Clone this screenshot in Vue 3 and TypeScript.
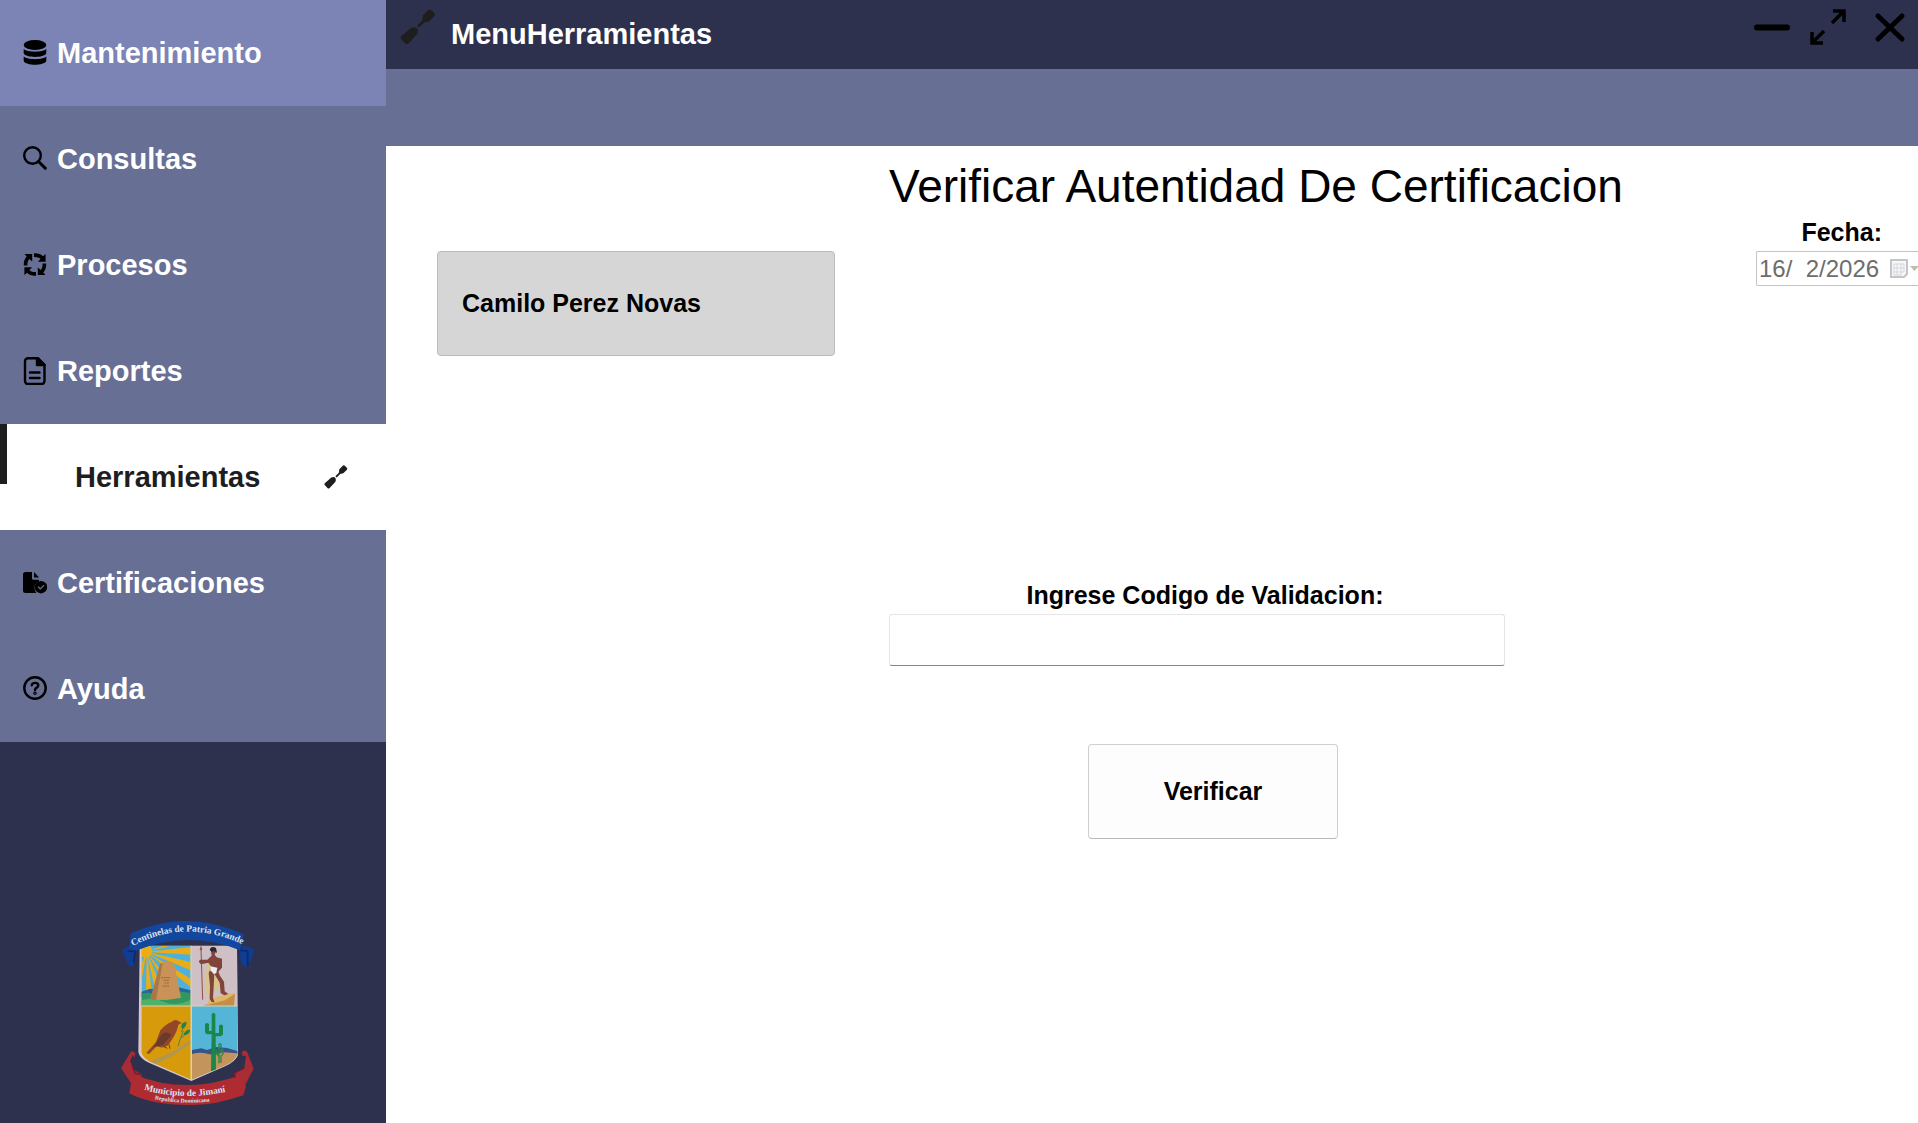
<script setup lang="ts">
import { ref } from 'vue'

type IconName = 'database' | 'search' | 'cycle' | 'report' | 'tools' | 'certificate' | 'help'

interface MenuItem {
  label: string
  icon: IconName
}

const items: MenuItem[] = [
  { label: 'Mantenimiento', icon: 'database' },
  { label: 'Consultas', icon: 'search' },
  { label: 'Procesos', icon: 'cycle' },
  { label: 'Reportes', icon: 'report' },
  { label: 'Herramientas', icon: 'tools' },
  { label: 'Certificaciones', icon: 'certificate' },
  { label: 'Ayuda', icon: 'help' },
]

const active = ref('Herramientas')
const highlighted = ref('Mantenimiento')
const code = ref('')
const date = ref('16/  2/2026')
</script>

<template>
  <div class="app">
    <aside class="sidebar">
      <nav class="menu">
        <button
          v-for="item in items"
          :key="item.label"
          type="button"
          class="item"
          :class="{ active: item.label === active, highlighted: item.label === highlighted }"
          @click="active = item.label"
        >
          <svg v-if="item.icon === 'database'" class="icon" viewBox="0 0 24 28">
            <ellipse cx="12" cy="6" rx="11.3" ry="5" />
            <path d="M.7 10C4 13.500 20 13.500 23.300 10V14.500C21 19 3 19 .7 14.500Z" />
            <path d="M.7 17.500C4 21 20 21 23.300 17.500V22C21 27 3 27 .7 22Z" />
          </svg>
          <svg v-else-if="item.icon === 'search'" class="icon line" viewBox="0 0 24 28">
            <circle cx="9.500" cy="10.500" r="8.300" />
            <path d="M15.500 16.500 22.300 23.300" stroke-width="3" />
          </svg>
          <svg v-else-if="item.icon === 'cycle'" class="icon" viewBox="0 0 24 28">
            <g v-for="angle in [0, 90, 180, 270]" :key="angle" :transform="`rotate(${angle} 12 13.5)`">
              <path d="M11 2.300C15 2.100 18 3.200 20 5.200L22.600 3V10.700H15L17.600 7.800C16 6.500 14 5.800 11 5.900Z" />
            </g>
          </svg>
          <svg v-else-if="item.icon === 'report'" class="icon line" viewBox="0 0 24 28">
            <path d="M5 1.200H15L21.500 8V24a3 3 0 0 1-3 3H5a3 3 0 0 1-3-3V4.200a3 3 0 0 1 3-3Z" />
            <path d="M14 1.200V8H21.500Z" fill="currentColor" />
            <path d="M7 15.500H16.500M7 21H16.500" />
          </svg>
          <svg v-else-if="item.icon === 'tools'" class="icon" viewBox="0 0 36 36">
            <path d="M28.500.7Q30 0 31.200 1L34.600 4.500Q35.500 5.800 34.400 7L29 12.500 24.300 13.500 19 18.600 17 16.700 22.300 11.500 23 6.300Z" />
            <path d="M8 21.500C12 17 16.500 17.500 17.500 20.500 18.500 24 17 25.500 14 28.500L8.500 34.500Q6.700 36 5.200 34.500L1 30Q0 28.500 1.200 27.300Z" />
          </svg>
          <svg v-else-if="item.icon === 'certificate'" class="icon" viewBox="0 0 24 28">
            <path d="M2.500 3H9V9.500Q9 10.800 10.500 10.800H16V12.500C11.500 14 10 19 13.500 24H2.500Q0 24 0 21.500V5.500Q0 3 2.500 3Z" />
            <path d="M11 3 16 8.500H11Z" />
            <path fill-rule="evenodd" d="M18 12A6.200 6.200 0 1 0 18 24.400 6.200 6.200 0 1 0 18 12ZM17.300 20.800 14.600 18.200 15.500 17.300 17.300 19 20.700 15.700 21.600 16.600Z" />
          </svg>
          <svg v-else class="icon line" viewBox="0 0 24 28">
            <circle cx="12" cy="13" r="10.700" />
            <path d="M8.800 10.300C9 7 15.500 7 15.300 10.500 15.200 12.800 12 12.500 12 15" />
            <circle cx="12" cy="18.300" r=".6" />
          </svg>
          <span>{{ item.label }}</span>
        </button>
      </nav>

      <svg class="crest" viewBox="60 50 405 570" role="img" aria-label="Municipio de Jimaní">
        <defs>
          <clipPath id="shield">
            <path d="M125 136H411L413 460Q405 482 377 495L274 538 160 488Q128 475 124 455Z" />
          </clipPath>
          <path id="arc-top" d="M98 137Q262 50 440 138" />
          <path id="arc-bottom" d="M132 568Q262 606 404 568" />
          <path id="arc-small" d="M164 597Q262 616 370 598" />
        </defs>

        <path d="M119 142 125 136H411L414 465Q405 485 377 497L274 542 150 489Q118 475 115 455Z" fill="#d8c7ce" />
        <g clip-path="url(#shield)">
          <rect x="120" y="130" width="152" height="186" fill="#4fb0dc" />
          <g fill="#e9ad18">
            <path d="M140 155 205 130H235Z" />
            <path d="M140 155 272 140V163Z" />
            <path d="M140 155 272 185V210Z" />
            <path d="M140 155 272 235V260Z" />
            <path d="M140 155 240 280 215 285Z" />
            <path d="M140 155 195 285 170 290Z" />
            <path d="M140 155 158 290 138 280Z" />
            <path d="M140 155 125 240 120 200Z" />
            <circle cx="137" cy="152" r="20" />
          </g>
          <path d="M120 276 150 265 190 270 235 261 272 270V290H120Z" fill="#28669a" />
          <path d="M120 280 145 277 180 283 230 272 272 278V318H120Z" fill="#319761" />
          <path d="M120 302Q155 288 190 304T272 298V318H120Z" fill="#50b16a" />
          <path d="M151 298 180 190Q200 180 222 188L243 292 200 299Z" fill="#c99257" />
          <path d="M151 298 180 190 188 188 168 299Z" fill="#a87849" />
          <g stroke="#936138" stroke-width="3" stroke-dasharray="5 2">
            <path d="M184 232H212M191 240H207M194 248H206M188 257H208" />
          </g>

          <rect x="274" y="130" width="142" height="186" fill="#cec0c4" />
          <path d="M306 318 338 304 382 283 405 280 402 318Z" fill="#c58e45" />
          <path d="M328 297 380 280 405 280 375 300 320 314Z" fill="#dfb76c" />
          <path d="M324 180Q314 220 316 275L328 294 345 265 370 274Q353 225 358 184Z" fill="#d8c58d" />
          <path d="M303 145 308 298" stroke="#8d5240" stroke-width="3" />
          <path d="M303 134 299 149H307Z" fill="#a34b3b" />
          <g fill="#81443a">
            <path d="M332 145Q345 137 349 151L344 163 350 171 366 175 366 202 355 214 360 226 372 244 374 273 385 281 373 285 362 279 359 247 343 220 341 260 339 294 344 306 335 305 329 296 330 258 326 218 334 200 325 187 303 192 296 184 300 178 322 178 335 166Z" />
          </g>
          <path d="M329 149Q333 134 348 143L351 158 342 151 336 155Z" fill="#292936" />
          <path d="M332 198 352 202 349 218 342 222 331 210Z" fill="#e7edf0" />

          <rect x="120" y="317" width="153" height="230" fill="#d79a0b" />
          <path d="M148 484 218 455 272 418V430L217 467 165 491Z" fill="#af9652" />
          <path d="M234 438Q242 410 250 392M244 412 264 397M244 395 252 376" fill="none" stroke="#528648" stroke-width="3" />
          <path d="M244 382Q242 366 259 364 261 377 249 385M250 403Q257 387 270 388 272 399 255 404" fill="#26824c" />
          <path d="M139 458 168 425 181 390Q198 370 216 364 225 354 236 363L245 368 235 373Q232 391 219 413L205 434Q190 446 170 438L147 461Z" fill="#914728" />
          <path d="M185 402Q202 390 215 404L188 434 161 440Z" fill="#693b2a" />
          <path d="M190 438 202 444M207 432 210 445" stroke="#69412a" stroke-width="3" />

          <rect x="276" y="317" width="140" height="145" fill="#55b5d7" />
          <path d="M276 449 304 444 321 449 348 440 381 443 414 453V465H276Z" fill="#37538b" />
          <path d="M276 461Q300 454 322 460T370 456L415 459V547H276Z" fill="#c3945b" />
          <path d="M335 342Q340 333 346 342V398H357V376Q363 369 369 376V402Q367 407 361 408H347L348 512H333L335 402H322Q316 401 315 395V372Q321 364 327 372V392H335Z" fill="#188747" />
          <path d="M357 489V432Q360 428 363 432V455L369 448V461L363 467V488M357 469 350 461V448" fill="none" stroke="#29864b" stroke-width="4" />
        </g>
        <path d="M273 136V538M124 317H412" stroke="#ddd4ae" stroke-width="3" />

        <path d="M68 145 92 136 105 153 102 193 93 201 81 186 67 151Z" fill="#103d91" />
        <path d="M458 144 430 136 419 151 423 191 440 201 454 178 462 151Z" fill="#103d91" />
        <path d="M92 99Q260 23 431 102L420 150Q263 87 103 153L88 142Z" fill="#12479d" />
        <path d="M82 152 105 153 101 188M421 150 443 152 443 198" fill="none" stroke="#092b70" stroke-width="5" />

        <path d="M63 503 92 455Q98 449 106 459L104 472 99 464 91 480 103 510 126 522 123 533 95 552Z" fill="#a72c35" />
        <path d="M461 505 442 456Q432 445 425 457L428 467 438 466 433 503 404 518 405 533 437 552Z" fill="#a72c35" />
        <path d="M96 552 105 523Q256 585 424 523L438 558 430 585Q344 615 280 614 154 616 88 579L93 548Z" fill="#af2b32" />
        <path d="M92 481 105 519 126 522M433 503 404 518 405 533" fill="none" stroke="#6f1c2b" stroke-width="4" />

        <g class="crest-text">
          <text font-size="28"><textPath href="#arc-top">Centinelas de Patria Grande</textPath></text>
          <text font-size="28"><textPath href="#arc-bottom">Municipio de Jimaní</textPath></text>
          <text font-size="17"><textPath href="#arc-small">Republica Dominicana</textPath></text>
        </g>
      </svg>
    </aside>

    <div class="main">
      <header class="titlebar">
        <svg class="tool" viewBox="0 0 36 36">
          <path d="M28.500.7Q30 0 31.200 1L34.600 4.500Q35.500 5.800 34.400 7L29 12.500 24.300 13.500 19 18.600 17 16.700 22.300 11.500 23 6.300Z" />
          <path d="M8 21.500C12 17 16.500 17.500 17.500 20.500 18.500 24 17 25.500 14 28.500L8.500 34.500Q6.700 36 5.200 34.500L1 30Q0 28.500 1.200 27.300Z" />
        </svg>
        <h1 class="window-name">MenuHerramientas</h1>
        <div class="controls">
          <button type="button" aria-label="Minimizar">
            <svg viewBox="0 0 36 36"><path d="M3 18.500H33" stroke-width="6" stroke-linecap="round" /></svg>
          </button>
          <button type="button" aria-label="Maximizar">
            <svg viewBox="0 0 36 36">
              <path d="M23 2H34V13M34 2 22 14M2 23V34H13M2 34 14 22" stroke-width="3.500" />
            </svg>
          </button>
          <button type="button" class="close" aria-label="Cerrar">
            <svg viewBox="0 0 36 36"><path d="M6 7 30 30M30 7 6 30" stroke-width="5" stroke-linecap="round" /></svg>
          </button>
        </div>
      </header>
      <div class="subbar"></div>

      <main class="content">
        <div class="user-column">
          <button type="button" class="user">Camilo Perez Novas</button>
        </div>

        <form class="form" @submit.prevent>
          <h2 class="heading">Verificar Autentidad De Certificacion</h2>
          <div class="fields">
            <label for="code">Ingrese Codigo de Validacion:</label>
            <input id="code" v-model="code" class="code" type="text" />
            <button type="submit" class="verify">Verificar</button>
          </div>
        </form>

        <div class="date-column">
          <label for="date">Fecha:</label>
          <div class="date">
            <input id="date" v-model="date" type="text" disabled />
            <svg viewBox="0 0 36 20">
              <path d="M1 1H17V15L14 18H1Z" fill="#f6f7f8" stroke="#c4c4c4" stroke-width="2" />
              <path d="M4 5H14M4 9H14M4 13H14M4 5V16M7 5V16M11 5V16M14 5V13M4 16H11" fill="none" stroke="#d3d7dd" />
              <path d="M20 7H29L24.500 12Z" fill="#bdbdb0" />
            </svg>
          </div>
        </div>
      </main>
    </div>
  </div>
</template>

<style>
body {
  margin: 0;
}
</style>

<style scoped>
.app {
  display: flex;
  min-height: 100vh;
  background: #fff;
  color: #000;
  font-family: 'Liberation Sans', Arial, sans-serif;
}

button,
input {
  font-family: inherit;
  color: inherit;
}

.sidebar {
  display: flex;
  flex: 0 0 386px;
  flex-direction: column;
  justify-content: space-between;
  background: #2d314d;
}

.menu {
  display: flex;
  flex-direction: column;
}

.item {
  display: flex;
  align-items: center;
  gap: 10px;
  height: 106px;
  padding: 0 38px 0 23px;
  border: 0;
  background: #686f95;
  color: #fff;
  font-size: 29px;
  font-weight: 700;
}

.item.highlighted {
  background: #7b84b5;
}

.item.active {
  position: relative;
  flex-direction: row-reverse;
  justify-content: space-between;
  padding-left: 75px;
  background: #fff;
  color: #1e1e1e;
}

.item.active::before {
  content: '';
  position: absolute;
  top: 0;
  left: 0;
  width: 7px;
  height: 60px;
  background: #1e1e1e;
}

.icon {
  width: 24px;
  height: 28px;
  color: #000;
  fill: currentColor;
}

.item.active .icon {
  color: #1e1e1e;
}

.icon.line {
  fill: none;
  stroke: currentColor;
  stroke-width: 2.4;
  stroke-linecap: round;
  stroke-linejoin: round;
}

.crest {
  width: 135px;
  height: 190px;
  margin: 24px 0 16px 120px;
}

.crest-text {
  fill: #dce3f2;
  font-family: 'Liberation Serif', 'Times New Roman', serif;
  font-weight: 700;
}

.main {
  display: flex;
  flex: 1;
  flex-direction: column;
  min-width: 0;
}

.titlebar {
  display: flex;
  height: 69px;
  padding: 0 4px 0 14px;
  box-sizing: border-box;
  background: #2d314d;
}

.tool {
  width: 36px;
  height: 36px;
  margin-top: 9px;
  fill: #1e1e1e;
}

.window-name {
  margin: 0 auto 0 15px;
  color: #fff;
  font-size: 29px;
  font-weight: 700;
  line-height: 69px;
}

.controls {
  display: flex;
  gap: 20px;
  height: 36px;
  margin-top: 9px;
}

.controls button {
  display: flex;
  justify-content: center;
  width: 36px;
  height: 36px;
  padding: 0;
  border: 0;
  background: none;
}

.controls .close {
  width: 48px;
}

.controls svg {
  width: 36px;
  height: 36px;
  fill: none;
  stroke: #000;
}

.subbar {
  height: 77px;
  background: #686f95;
}

.content {
  display: flex;
  padding-left: 51px;
  font-size: 25px;
  line-height: 30px;
}

.user-column {
  flex: 0 0 398px;
  padding-top: 105px;
  margin-right: 54px;
}

.user {
  width: 100%;
  height: 105px;
  padding: 0 24px;
  border: 1px solid #bababa;
  border-radius: 4px;
  background: #d6d6d6;
  font-size: 25px;
  font-weight: 700;
  text-align: left;
}

.form {
  flex: 1;
  padding-top: 12px;
}

.heading {
  margin: 0;
  font-size: 46px;
  font-weight: 400;
  line-height: 56px;
  white-space: nowrap;
}

.fields {
  display: flex;
  flex-direction: column;
  align-items: center;
  width: 616px;
  margin-top: 366px;
}

.fields label {
  margin: 0 0 4px 16px;
  font-weight: 700;
}

.code {
  width: 100%;
  height: 52px;
  padding: 0 10px;
  box-sizing: border-box;
  border: 1px solid #e5e5e5;
  border-bottom-color: #868686;
  border-radius: 3px;
  background: #fff;
  font-size: 25px;
}

.verify {
  width: 250px;
  height: 95px;
  margin: 78px 0 0 32px;
  border: 1px solid #d0d0d0;
  border-bottom-color: #bababa;
  border-radius: 4px;
  background: #fdfdfd;
  font-size: 25px;
  font-weight: 700;
}

.date-column {
  display: flex;
  flex: 0 0 162px;
  flex-direction: column;
  gap: 4px;
  min-width: 0;
  padding-top: 71px;
}

.date-column label {
  padding-right: 36px;
  font-weight: 700;
  text-align: right;
}

.date {
  display: flex;
  align-items: center;
  height: 35px;
  box-sizing: border-box;
  border: 1px solid #c4c4c4;
  border-right: 0;
  border-radius: 2px 0 0 2px;
  overflow: hidden;
}

.date input {
  flex: 0 0 133px;
  width: 133px;
  padding: 0 0 0 2px;
  box-sizing: border-box;
  border: 0;
  background: none;
  color: #6d6d6d;
  font-size: 24px;
}

.date svg {
  flex: 0 0 36px;
  height: 20px;
}
</style>
